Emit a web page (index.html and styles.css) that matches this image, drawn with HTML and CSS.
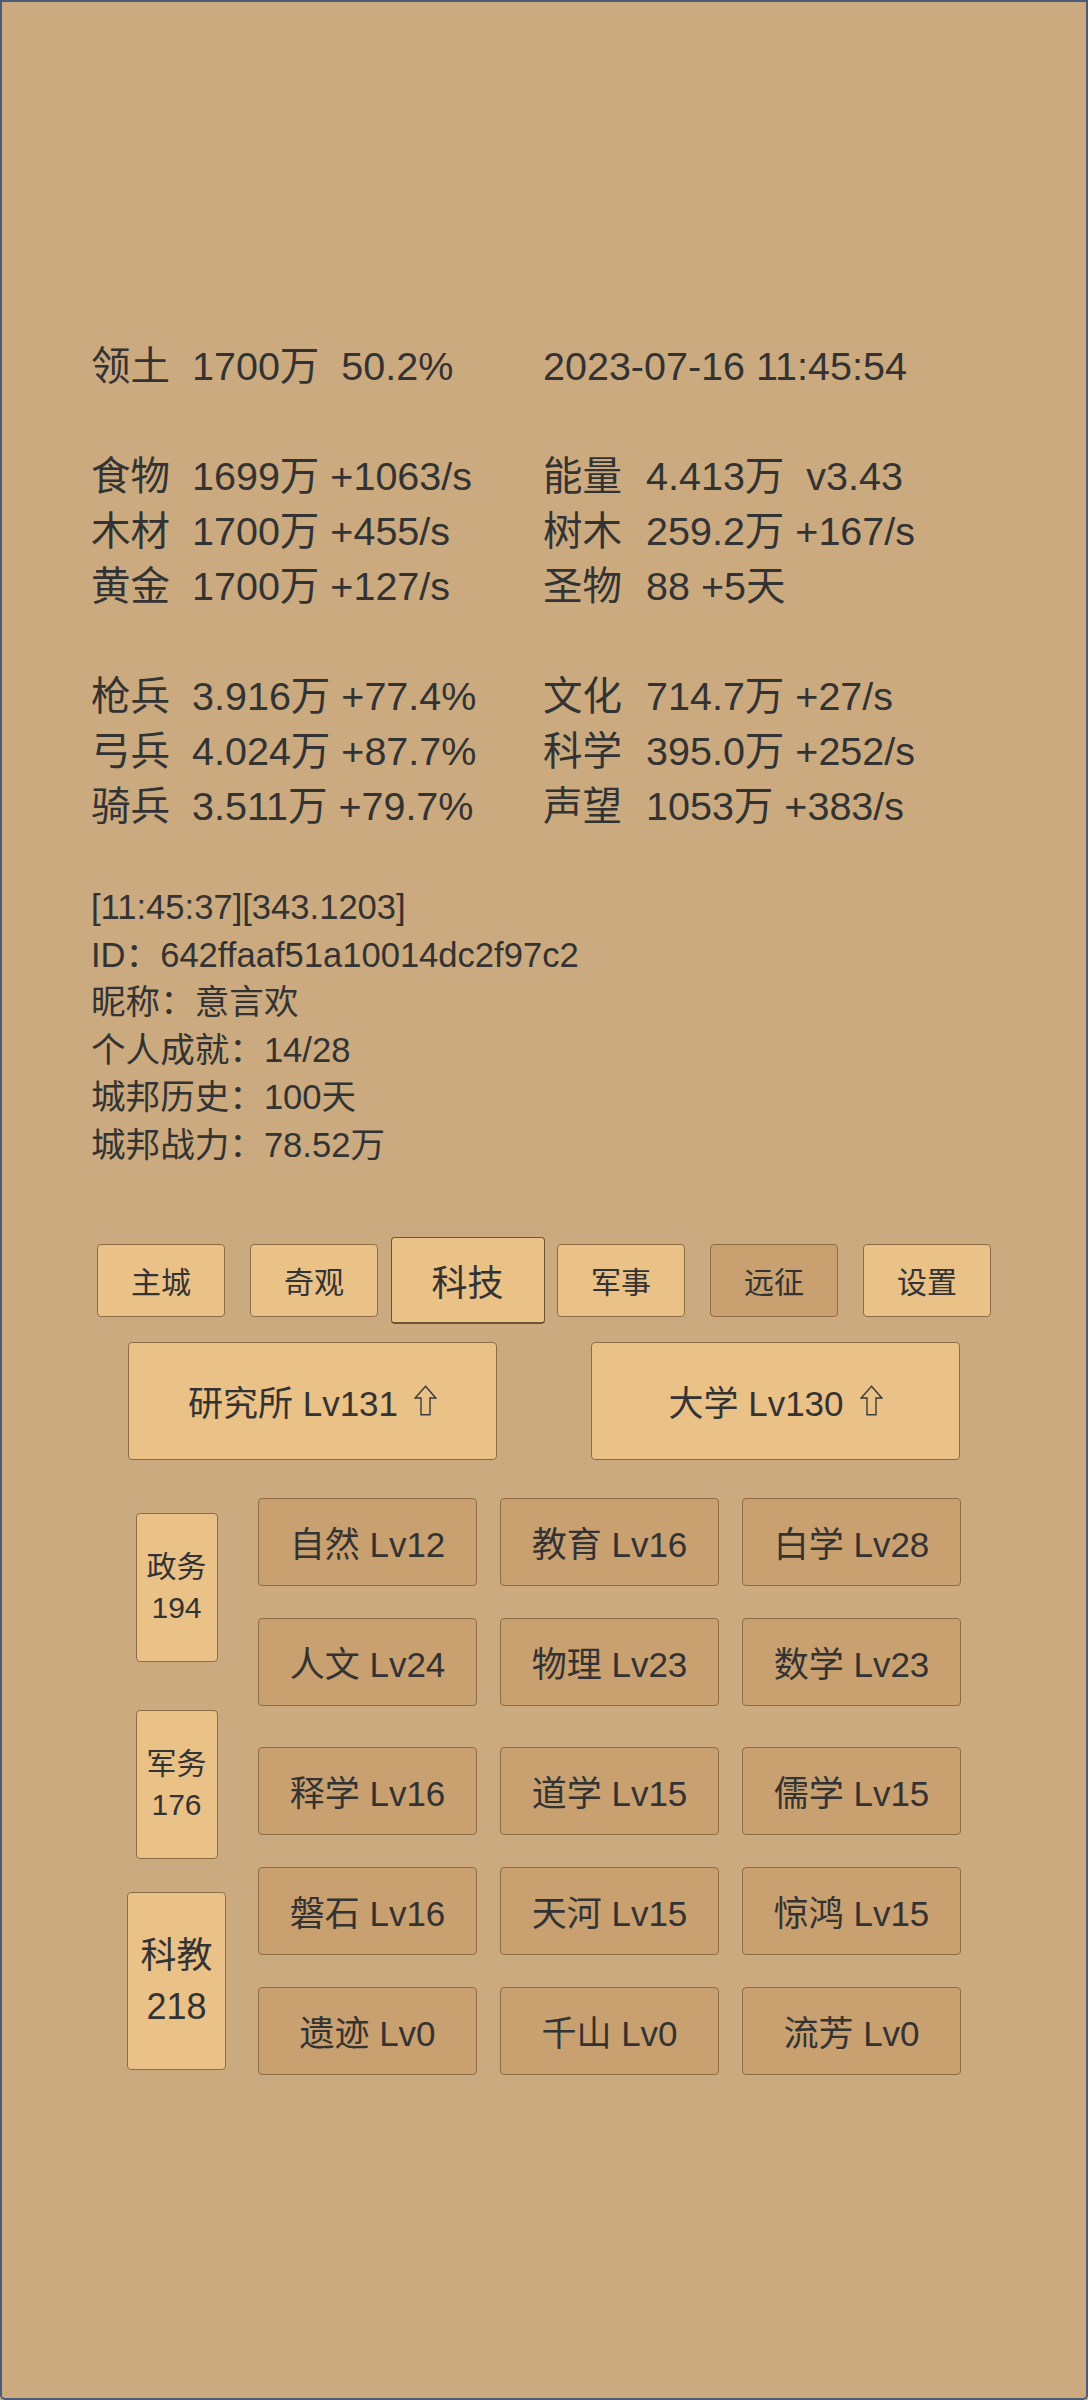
FILE: index.html
```html
<!DOCTYPE html>
<html lang="zh-CN">
<head>
<meta charset="utf-8">
<title>城邦</title>
<link rel="stylesheet" href="styles.css">
</head>
<body>
<div class="page">
  <section class="stats">
    <div class="row"><div><span class="k">领土</span><span>1700万  50.2%</span></div><div class="c2"><span>2023-07-16 11:45:54</span></div></div>
    <div class="group">
      <div class="row"><div><span class="k">食物</span><span>1699万 +1063/s</span></div><div class="c2"><span class="k">能量</span><span>4.413万  v3.43</span></div></div>
      <div class="row"><div><span class="k">木材</span><span>1700万 +455/s</span></div><div class="c2"><span class="k">树木</span><span>259.2万 +167/s</span></div></div>
      <div class="row"><div><span class="k">黄金</span><span>1700万 +127/s</span></div><div class="c2"><span class="k">圣物</span><span>88 +5天</span></div></div>
    </div>
    <div class="group">
      <div class="row"><div><span class="k">枪兵</span><span>3.916万 +77.4%</span></div><div class="c2"><span class="k">文化</span><span>714.7万 +27/s</span></div></div>
      <div class="row"><div><span class="k">弓兵</span><span>4.024万 +87.7%</span></div><div class="c2"><span class="k">科学</span><span>395.0万 +252/s</span></div></div>
      <div class="row"><div><span class="k">骑兵</span><span>3.511万 +79.7%</span></div><div class="c2"><span class="k">声望</span><span>1053万 +383/s</span></div></div>
    </div>
  </section>

  <section class="info">
    <div>[11:45:37][343.1203]</div>
    <div>ID：642ffaaf51a10014dc2f97c2</div>
    <div>昵称：意言欢</div>
    <div>个人成就：14/28</div>
    <div>城邦历史：100天</div>
    <div>城邦战力：78.52万</div>
  </section>

  <nav class="tabs">
    <div class="tab">主城</div>
    <div class="tab">奇观</div>
    <div class="tab active">科技</div>
    <div class="tab">军事</div>
    <div class="tab dim">远征</div>
    <div class="tab">设置</div>
  </nav>

  <div class="buildings">
    <div class="bld"><span>研究所 Lv131</span><svg class="up" viewBox="0 0 23 31" width="23" height="31"><path d="M11.5 1.2 L21.8 13 H16 V29.8 H7 V13 H1.2 Z"/></svg></div>
    <div class="bld"><span>大学 Lv130</span><svg class="up" viewBox="0 0 23 31" width="23" height="31"><path d="M11.5 1.2 L21.8 13 H16 V29.8 H7 V13 H1.2 Z"/></svg></div>
  </div>

  <div class="tech">
    <div class="cats">
      <div class="cat c1"><span>政务</span><span>194</span></div>
      <div class="cat c2"><span>军务</span><span>176</span></div>
      <div class="cat active"><span>科教</span><span>218</span></div>
    </div>
    <div class="grid">
      <div class="cell">自然 Lv12</div>
      <div class="cell">教育 Lv16</div>
      <div class="cell">白学 Lv28</div>
      <div class="cell">人文 Lv24</div>
      <div class="cell">物理 Lv23</div>
      <div class="cell">数学 Lv23</div>
      <div class="cell shift">释学 Lv16</div>
      <div class="cell shift">道学 Lv15</div>
      <div class="cell shift">儒学 Lv15</div>
      <div class="cell">磐石 Lv16</div>
      <div class="cell">天河 Lv15</div>
      <div class="cell">惊鸿 Lv15</div>
      <div class="cell">遗迹 Lv0</div>
      <div class="cell">千山 Lv0</div>
      <div class="cell">流芳 Lv0</div>
    </div>
  </div>
</div>
</body>
</html>
```

FILE: styles.css
```css
html, body {
  margin: 0;
  padding: 0;
  background: #cbaa80;
}

.page {
  box-sizing: border-box;
  width: 1088px;
  height: 2400px;
  border: 2px solid #4c5a78;
  border-radius: 0 0 5px 5px;
  background: #cbaa80;
  color: #333333;
  font-family: "Liberation Sans", "Noto Sans CJK SC", sans-serif;
  overflow: hidden;
}

/* resource stats */
.stats {
  padding: 337px 0 0 89px;
  font-size: 39.5px;
  line-height: 55px;
}

.stats .row {
  display: grid;
  grid-template-columns: 452px auto;
  white-space: pre;
}

.stats .group {
  margin-top: 55px;
}

.stats .k {
  display: inline-block;
  margin-right: 22px;
}

.stats .c2 .k {
  margin-right: 24px;
}

/* player info */
.info {
  margin-top: 50px;
  padding-left: 89px;
  font-size: 34.6px;
  line-height: 47.6px;
}

/* top tabs */
.tabs {
  display: flex;
  justify-content: center;
  align-items: center;
  height: 87px;
  margin-top: 67px;
}

.tab {
  box-sizing: border-box;
  width: 128px;
  height: 73px;
  margin: 0 12.5px;
  display: flex;
  align-items: center;
  justify-content: center;
  background: #eac187;
  border: 1px solid #8c6e46;
  border-radius: 4px;
  font-size: 30px;
}

.tab.active {
  width: 154px;
  height: 87px;
  margin: 0;
  font-size: 36px;
  border-color: #6f5434;
  border-bottom-width: 2px;
}

.tab.dim {
  background: #c9a06f;
}

/* buildings */
.buildings {
  display: flex;
  justify-content: center;
  gap: 94px;
  margin-top: 18px;
}

.bld {
  box-sizing: border-box;
  width: 369px;
  height: 118px;
  display: flex;
  align-items: center;
  justify-content: center;
  background: #eac187;
  border: 1px solid #8c6e46;
  border-radius: 4px;
  font-size: 35px;
}

.up {
  margin-left: 16px;
  fill: none;
  stroke: #3a3a3a;
  stroke-width: 1.4;
  stroke-linejoin: miter;
}

/* tech area */
.tech {
  display: flex;
  gap: 32px;
  margin-top: 38px;
  padding-left: 125px;
}

.cats {
  width: 99px;
  display: flex;
  flex-direction: column;
  align-items: center;
}

.cat {
  box-sizing: border-box;
  width: 82px;
  height: 149px;
  display: flex;
  flex-direction: column;
  align-items: center;
  justify-content: center;
  background: #eac187;
  border: 1px solid #8c6e46;
  border-radius: 4px;
  font-size: 30px;
  line-height: 41px;
}

.cat.c1 {
  margin-top: 15px;
}

.cat.c2 {
  margin-top: 48px;
}

.cat.active {
  width: 99px;
  height: 178px;
  margin-top: 33px;
  font-size: 36px;
  line-height: 51px;
}

.grid {
  display: grid;
  grid-template-columns: repeat(3, 219px);
  column-gap: 23px;
  row-gap: 32px;
  align-content: start;
}

.cell {
  box-sizing: border-box;
  height: 88px;
  display: flex;
  align-items: center;
  justify-content: center;
  background: #c9a06f;
  border: 1px solid #8c6e46;
  border-radius: 4px;
  font-size: 35px;
}

.cell.shift {
  margin-top: 9px;
}
```
